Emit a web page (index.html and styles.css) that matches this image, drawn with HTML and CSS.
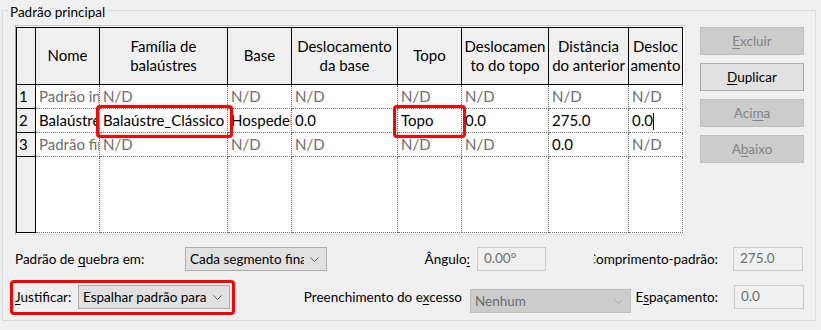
FILE: index.html
```html
<!DOCTYPE HTML>
<html lang="pt-BR">
<head>
	<meta charset="UTF-8" />
	<title>Padrão principal</title>
	<link rel="stylesheet" href="styles.css">
</head>
<body>
	<div class="group">
		<div class="groupTitle">Padrão principal</div>

		<div class="topRow">
			<div class="gridBox">
				<table class="grid">
					<colgroup>
						<col style="width:19px"><col style="width:64px"><col style="width:128px"><col style="width:64px"><col style="width:106px"><col style="width:64px"><col style="width:87px"><col style="width:80px"><col style="width:54px">
					</colgroup>
					<thead>
						<tr>
							<th></th>
							<th>Nome</th>
							<th>Família de<br>balaústres</th>
							<th>Base</th>
							<th>Deslocamento<br>da base</th>
							<th>Topo</th>
							<th>Deslocamen<br>to do topo</th>
							<th>Distância<br>do anterior</th>
							<th>Desloc<br>amento</th>
						</tr>
					</thead>
					<tbody>
						<tr class="dim">
							<td class="num">1</td>
							<td>Padrão inicial</td>
							<td>N/D</td>
							<td>N/D</td>
							<td>N/D</td>
							<td>N/D</td>
							<td>N/D</td>
							<td>N/D</td>
							<td>N/D</td>
						</tr>
						<tr>
							<td class="num">2</td>
							<td>Balaústre</td>
							<td>Balaústre_Clássico</td>
							<td>Hospedeiro</td>
							<td>0.0</td>
							<td>Topo</td>
							<td>0.0</td>
							<td>275.0</td>
							<td>0.0<span class="caret"></span></td>
						</tr>
						<tr class="dim">
							<td class="num">3</td>
							<td>Padrão final</td>
							<td>N/D</td>
							<td>N/D</td>
							<td>N/D</td>
							<td>N/D</td>
							<td>N/D</td>
							<td class="on">0.0</td>
							<td>N/D</td>
						</tr>
						<tr class="spare">
							<td class="num"></td>
							<td></td><td></td><td></td><td></td><td></td><td></td><td></td><td></td>
						</tr>
					</tbody>
				</table>
			</div>

			<div class="buttons">
				<button class="btn" disabled><u>E</u>xcluir</button>
				<button class="btn"><u>D</u>uplicar</button>
				<button class="btn" disabled>Aci<u>m</u>a</button>
				<button class="btn" disabled>A<u>b</u>aixo</button>
			</div>
		</div>

		<div class="fields rowA">
			<label class="lbl breakLbl"><span>Padrão de <u>q</u>uebra em:</span></label>
			<div class="combo breakCombo">
				<span class="comboText">Cada segmento final</span>
				<svg class="chev" width="9" height="5" viewBox="0 0 9 5"><polyline points="0.5,0.5 4.5,4.5 8.5,0.5" /></svg>
			</div>
			<label class="lbl rlbl angleLbl"><span>Ângulo<u>:</u></span></label>
			<div class="field angleField">0.00°</div>
			<label class="lbl rlbl lengthLbl"><span>Comprimento-padrão:</span></label>
			<div class="field numField">275.0</div>
		</div>

		<div class="fields rowB">
			<label class="lbl justLbl"><span><u>J</u>ustificar:</span></label>
			<div class="combo justCombo">
				<span class="comboText">Espalhar padrão para</span>
				<svg class="chev" width="9" height="5" viewBox="0 0 9 5"><polyline points="0.5,0.5 4.5,4.5 8.5,0.5" /></svg>
			</div>
			<label class="lbl rlbl fillLbl"><span>Preenchimento do e<u>x</u>cesso</span></label>
			<div class="combo off fillCombo">
				<span class="comboText">Nenhum</span>
				<svg class="chev" width="9" height="5" viewBox="0 0 9 5"><polyline points="0.5,0.5 4.5,4.5 8.5,0.5" /></svg>
			</div>
			<label class="lbl rlbl spaceLbl"><span>E<u>s</u>paçamento:</span></label>
			<div class="field numField">0.0</div>
		</div>

		<!-- red highlight marks -->
		<div class="mark markFamily"></div>
		<div class="mark markTop"></div>
		<div class="mark markJustify"></div>
	</div>
</body>
</html>
```

FILE: styles.css
```css
body {
	margin: 0;
	background: #f0f0f0;
	font-family: Lato, "Open Sans", sans-serif;
	font-size: 13.5px;
	color: #000;
}

u {
	text-decoration-thickness: 1px;
	text-underline-offset: 2px;
}

/* group box */

.group {
	position: relative;
	box-sizing: border-box;
	margin: 10px 5px 0 2px;
	height: 311px;
	border: 1px solid #dcdcdc;
	padding: 0 11px 0 12px;
}
.groupTitle {
	width: max-content;
	margin: -8px 0 0 -7px;
	padding: 0 2px;
	line-height: 18px;
	background: #f0f0f0;
}

.topRow {
	display: flex;
	align-items: flex-start;
	margin-top: 4px;
}

/* grid */

.gridBox {
	box-sizing: border-box;
	width: 671px;
	height: 210px;
	padding-top: 1px;
	background: #fff;
	border: 1px solid #e3e3e3;
	border-top-color: #c8c8c8;
	border-left-color: #a0a0a0;
}
table.grid {
	border-collapse: collapse;
	table-layout: fixed;
	width: 667px;
	font-size: 15px;
}
.grid th {
	height: 55px;
	padding: 0 0 1px;
	border: 1px solid #000;
	background: #f0f0f0;
	font-weight: normal;
	text-align: center;
	line-height: 19px;
	white-space: nowrap;
	overflow: hidden;
}
.grid td {
	height: 21px;
	padding: 0 0 2px 3px;
	border: 1px dotted #6e6e6e;
	white-space: nowrap;
	overflow: hidden;
	line-height: 20px;
}
.grid td.num {
	border: 1px solid #000;
	background: #f0f0f0;
	padding-left: 2px;
	color: #000;
}
.grid tr.dim td {
	color: #6d6d6d;
}
.grid tr.dim td.num,
.grid tr.dim td.on {
	color: #000;
}
.grid tr.spare td {
	height: 73px;
}
.caret {
	display: inline-block;
	width: 0;
	height: 17px;
	border-left: 1px solid #000;
	vertical-align: -4px;
}

/* side buttons */

.buttons {
	display: flex;
	flex-direction: column;
	gap: 8px;
	margin: 2px 0 0 14px;
}
.btn {
	box-sizing: border-box;
	width: 104px;
	height: 28px;
	padding: 0;
	background: #e1e1e1;
	border: 1px solid #adadad;
	font-family: inherit;
	font-size: 13.5px;
	color: #000;
}
.btn:disabled {
	background: #cccccc;
	border-color: #bfbfbf;
	color: #838383;
}

/* bottom fields */

.fields {
	display: flex;
	align-items: flex-start;
	height: 24px;
}
.rowA {
	margin-top: 12px;
}
.rowB {
	margin-top: 14px;
}
.lbl {
	flex: none;
	display: flex;
	align-items: center;
	height: 24px;
	white-space: nowrap;
	overflow: hidden;
}
.rlbl {
	justify-content: flex-end;
}
.breakLbl { width: 170px; }
.angleLbl { width: 143px; padding-right: 7px; }
.lengthLbl { width: 124px; margin-left: 48px; margin-right: 15px; }
.justLbl { width: 63px; }
.fillLbl { width: 232px; padding-right: 8px; }
.spaceLbl { width: 87px; padding-right: 16px; }

.combo {
	flex: none;
	box-sizing: border-box;
	display: flex;
	align-items: center;
	height: 24px;
	padding: 0 7px 0 4px;
	background: #e1e1e1;
	border: 1px solid #adadad;
}
.comboText {
	flex: 1;
	overflow: hidden;
	white-space: nowrap;
}
.chev {
	flex: none;
	margin-left: 6px;
}
.chev polyline {
	fill: none;
	stroke: #606060;
	stroke-width: 1;
}
.breakCombo { width: 142px; }
.justCombo { width: 152px; }
.fillCombo {
	width: 161px;
	margin-top: 4px;
	background: #cccccc;
	border-color: #bfbfbf;
	color: #6d6d6d;
}
.fillCombo .chev polyline {
	stroke: #a8a8a8;
}

.field {
	flex: none;
	box-sizing: border-box;
	height: 24px;
	padding: 0 0 0 6px;
	line-height: 21px;
	border: 1px solid #cccccc;
	color: #6d6d6d;
}
.angleField { width: 69px; }
.numField { width: 70px; }

/* red highlight marks */

.mark {
	position: absolute;
	box-sizing: border-box;
	border: 3px solid #f00;
	border-radius: 4px;
}
.markFamily { left: 93px; top: 94px; width: 137px; height: 33px; }
.markTop { left: 390px; top: 94px; width: 73px; height: 33px; }
.markJustify { left: 7px; top: 269px; width: 225px; height: 35px; }
```
